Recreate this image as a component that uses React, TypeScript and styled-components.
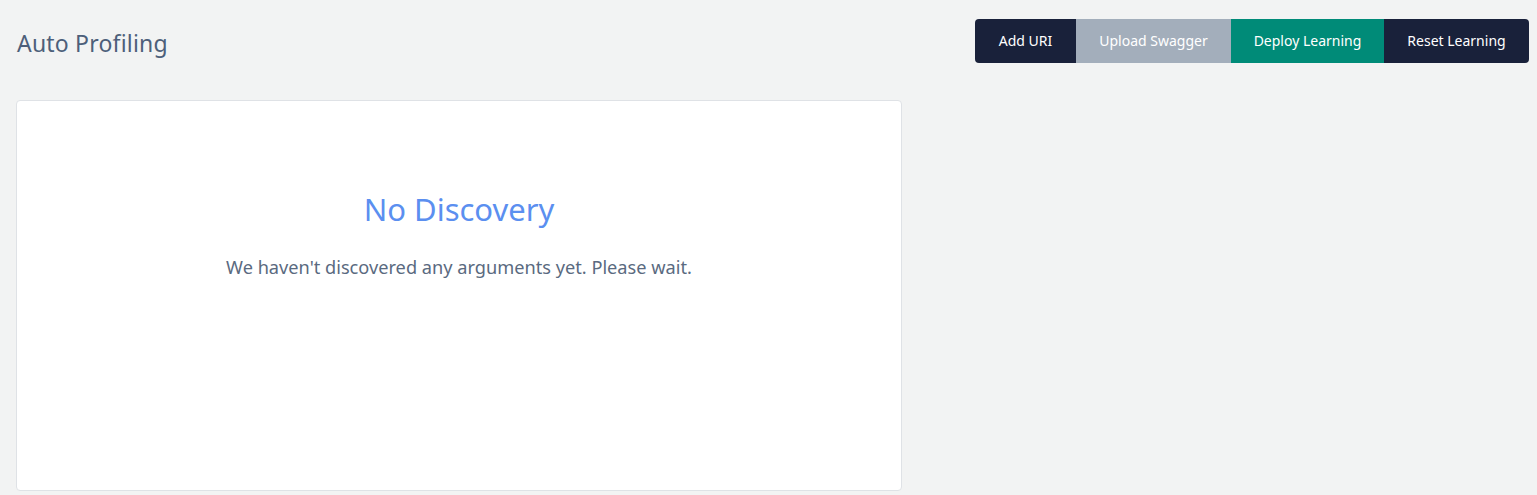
import React from "react";
import styled, { createGlobalStyle } from "styled-components";

const Global = createGlobalStyle`
  html, body { margin: 0; padding: 0; background: #f2f3f3; }
  body { font-family: "Noto Sans", "Open Sans", sans-serif; }
  * { box-sizing: border-box; }
`;

const Page = styled.div`
  padding: 19px 8px 0 16px;
  min-height: 495px;
`;

const Header = styled.div`
  display: flex;
  justify-content: space-between;
  align-items: center;
  height: 44px;
`;

const Title = styled.h1`
  margin: 0;
  padding: 3px 0 0 1px;
  font-weight: 400;
  font-size: 23px;
  color: #4d5f7a;
  letter-spacing: 0.2px;
`;

const ButtonGroup = styled.div`
  display: flex;
  border-radius: 4px;
  overflow: hidden;
  height: 44px;
`;

const Button = styled.button<{ $bg: string; $w: number }>`
  border: none;
  margin: 0;
  padding: 0 0 1px;
  width: ${(p) => p.$w}px;
  height: 44px;
  background: ${(p) => p.$bg};
  color: #ffffff;
  font-family: "Noto Sans", "Open Sans", sans-serif;
  font-size: 14px;
  cursor: pointer;
`;

const Card = styled.div`
  margin-top: 37px;
  width: 886px;
  height: 391px;
  background: #ffffff;
  border: 1px solid #dfe2e6;
  border-radius: 4px;
  display: flex;
  flex-direction: column;
  align-items: center;
  padding-top: 87px;
`;

const EmptyTitle = styled.h2`
  margin: 0;
  font-weight: 400;
  font-size: 31px;
  color: #5b8ff0;
`;

const EmptyText = styled.p`
  margin: 25px 0 0;
  font-size: 18.2px;
  color: #5a6a80;
`;

export default function App() {
  return (
    <>
      <Global />
      <Page>
        <Header>
          <Title>Auto Profiling</Title>
          <ButtonGroup>
            <Button $bg="#19213a" $w={101}>Add URI</Button>
            <Button $bg="#a3aebb" $w={155}>Upload Swagger</Button>
            <Button $bg="#008b78" $w={153}>Deploy Learning</Button>
            <Button $bg="#19213a" $w={145}>Reset Learning</Button>
          </ButtonGroup>
        </Header>
        <Card>
          <EmptyTitle>No Discovery</EmptyTitle>
          <EmptyText>We haven't discovered any arguments yet. Please wait.</EmptyText>
        </Card>
      </Page>
    </>
  );
}
